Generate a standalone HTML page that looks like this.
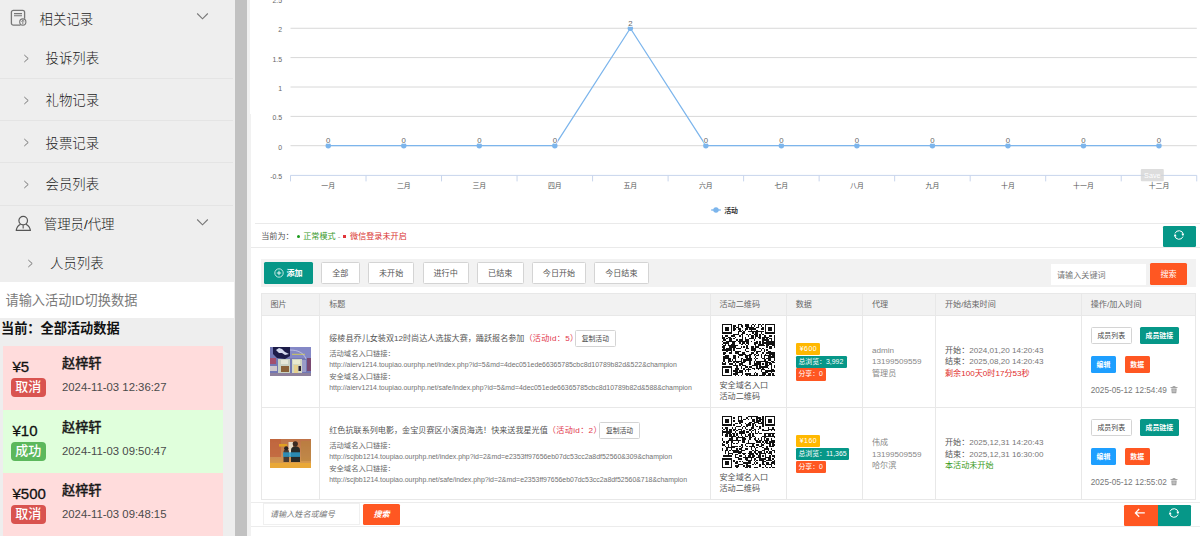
<!DOCTYPE html><html lang="zh-CN"><head><meta charset="utf-8"><title>活动管理</title><style>
*{box-sizing:border-box;margin:0;padding:0}
html,body{width:1200px;height:536px;overflow:hidden;background:#fff}
body{position:relative;font-family:"Liberation Sans","Noto Sans CJK SC",sans-serif;color:#555}
.a{position:absolute}
.t{position:absolute;white-space:nowrap;line-height:12px;height:12px}
.side{left:0;top:0;width:235px;height:536px;background:#eee}
.nav{font-size:13.4px;color:#333;line-height:18px;height:18px;font-weight:300;color:#1c1c1c;margin-top:1.4px}
.sep{position:absolute;left:0;width:233px;height:1px;background:#e4e4e4}
.card{position:absolute;left:3px;width:220px}
.amt{font-size:15px;color:#111;-webkit-text-stroke:.3px #111;line-height:18px;height:18px}
.bdg{position:absolute;left:10.5px;width:35.5px;height:18.8px;border-radius:4px;color:#fff;font-weight:500;font-size:13px;line-height:18.5px;text-align:center}
.nm{font-size:13.2px;font-weight:500;color:#1a1a1a;-webkit-text-stroke:.3px #1a1a1a;margin-top:1px;line-height:18px;height:18px}
.dt{font-size:11.35px;color:#4a4a4a;line-height:14px;height:14px}
.m{font-size:8.1px;color:#666;margin-top:.8px}
.s{font-size:7.3px;color:#6a6a6a;margin-top:.9px}
.u{font-size:6.93px;margin-top:0;color:#727272}
.btn{position:absolute;border-radius:1.5px;font-size:8.1px;text-align:center;white-space:nowrap}
.w{background:#fff;border:1px solid #d4d4d4;color:#555}
.teal{background:#069788;color:#fff}
.org{background:#ff5722;color:#fff}
.blue{background:#1e9fff;color:#fff}
.hl{position:absolute;height:1px;background:#e8e8e8}
.vl{position:absolute;width:1px;background:#e8e8e8}
.tag{position:absolute;left:795.75px;height:12.3px;border-radius:1.3px;color:#fff;font-size:6.9px;line-height:12.6px;padding:0 2.7px;white-space:nowrap;overflow:hidden}
</style></head><body>
<div class="a side"></div>
<div class="a" style="left:235px;top:0;width:12px;height:536px;background:#c1c1c1"></div>
<div class="a" style="left:247px;top:0;width:3px;height:536px;background:#f0f0f0"></div>
<div class="a" style="left:250px;top:114px;width:1px;height:422px;background:#f1f1f1"></div>
<svg class="a" style="left:10px;top:9px" width="18" height="18" viewBox="0 0 18 18"><path d="M10.5 16.2H3.4a2 2 0 0 1-2-2V3.3a2 2 0 0 1 2-2h9.2a2 2 0 0 1 2 2v6.5" fill="none" stroke="#777" stroke-width="1.3"/><path d="M4 4.6h8M4 6.7h8" stroke="#777" stroke-width="1.1"/><circle cx="12.8" cy="13" r="3.1" fill="#eee" stroke="#777" stroke-width="1.1"/><path d="M12.8 15v-3.6M11.3 12.6l1.5-1.4 1.5 1.4" fill="none" stroke="#777" stroke-width=".9"/></svg>
<div class="t nav" style="left:39.5px;top:10px">相关记录</div>
<svg class="a" style="left:195.5px;top:12px" width="13" height="9" viewBox="0 0 13 9"><path d="M1.2 1.5 L6.5 6.8 L11.8 1.5" fill="none" stroke="#777" stroke-width="1.1"/></svg>
<svg class="a" style="left:22.8px;top:54.0px" width="7" height="9" viewBox="0 0 7 9"><path d="M1.3 1 L5.2 4.5 L1.3 8" fill="none" stroke="#777" stroke-width="1"/></svg>
<div class="t nav" style="left:45.5px;top:49.0px">投诉列表</div>
<svg class="a" style="left:22.8px;top:95.5px" width="7" height="9" viewBox="0 0 7 9"><path d="M1.3 1 L5.2 4.5 L1.3 8" fill="none" stroke="#777" stroke-width="1"/></svg>
<div class="t nav" style="left:45.5px;top:90.5px">礼物记录</div>
<svg class="a" style="left:22.8px;top:138.25px" width="7" height="9" viewBox="0 0 7 9"><path d="M1.3 1 L5.2 4.5 L1.3 8" fill="none" stroke="#777" stroke-width="1"/></svg>
<div class="t nav" style="left:45.5px;top:133.25px">投票记录</div>
<svg class="a" style="left:22.8px;top:179.5px" width="7" height="9" viewBox="0 0 7 9"><path d="M1.3 1 L5.2 4.5 L1.3 8" fill="none" stroke="#777" stroke-width="1"/></svg>
<div class="t nav" style="left:45.5px;top:174.5px">会员列表</div>
<div class="sep" style="top:77.7px"></div>
<div class="sep" style="top:120px"></div>
<div class="sep" style="top:162.3px"></div>
<div class="sep" style="top:204.7px"></div>
<svg class="a" style="left:14px;top:214px" width="19" height="19" viewBox="0 0 19 19"><circle cx="9.2" cy="6.6" r="4.3" fill="none" stroke="#555" stroke-width="1.2"/><path d="M6.6 10.2 C4 11.4 2.6 13.8 2.2 16.4 H16.4 C16 13.8 14.6 11.4 11.8 10.2" fill="none" stroke="#555" stroke-width="1.2" stroke-linejoin="round"/><path d="M9.2 11v3.6" stroke="#777" stroke-width="1.4"/></svg>
<div class="t nav" style="left:43.75px;top:215px">管理员/代理</div>
<svg class="a" style="left:196px;top:217.5px" width="13" height="9" viewBox="0 0 13 9"><path d="M1.2 1.5 L6.5 6.8 L11.8 1.5" fill="none" stroke="#777" stroke-width="1.1"/></svg>
<svg class="a" style="left:26.8px;top:258.5px" width="7" height="9" viewBox="0 0 7 9"><path d="M1.3 1 L5.2 4.5 L1.3 8" fill="none" stroke="#777" stroke-width="1"/></svg>
<div class="t nav" style="left:50px;top:253.5px">人员列表</div>
<div class="a" style="left:0;top:281.75px;width:233.5px;height:36.5px;background:#fff"></div>
<div class="t" style="left:5.5px;top:291px;font-size:13.2px;color:#7a7a7a;line-height:18px;height:18px;margin-top:.6px">请输入活动ID切换数据</div>
<div class="t" style="left:1px;top:318.5px;font-size:13.2px;font-weight:700;color:#111;line-height:18px;height:18px;margin-top:1.4px">当前：全部活动数据</div>
<div class="card" style="top:345.5px;height:64px;background:#ffdcdc"></div>
<div class="t amt" style="left:12.5px;top:357.5px">¥5</div>
<div class="bdg" style="top:378.1px;background:#d9534f">取消</div>
<div class="t nm" style="left:62px;top:354.0px">赵梓轩</div>
<div class="t dt" style="left:62px;top:379.5px">2024-11-03 12:36:27</div>
<div class="card" style="top:409.5px;height:63px;background:#e0ffdc"></div>
<div class="t amt" style="left:12.5px;top:421.5px">¥10</div>
<div class="bdg" style="top:442.1px;background:#5cb85c">成功</div>
<div class="t nm" style="left:62px;top:418.0px">赵梓轩</div>
<div class="t dt" style="left:62px;top:443.5px">2024-11-03 09:50:47</div>
<div class="card" style="top:472.5px;height:64px;background:#ffdcdc"></div>
<div class="t amt" style="left:12.5px;top:484.5px">¥500</div>
<div class="bdg" style="top:505.1px;background:#d9534f">取消</div>
<div class="t nm" style="left:62px;top:481.0px">赵梓轩</div>
<div class="t dt" style="left:62px;top:506.5px">2024-11-03 09:48:15</div>
<svg class="a" style="left:0;top:0" width="1200" height="224" viewBox="0 0 1200 224" font-family="Liberation Sans,Noto Sans CJK SC,sans-serif"><path d="M290.5 28.25H1196.8" stroke="#d8d8d8" stroke-width="1" fill="none"/><path d="M290.5 57.6H1196.8" stroke="#d8d8d8" stroke-width="1" fill="none"/><path d="M290.5 87.0H1196.8" stroke="#d8d8d8" stroke-width="1" fill="none"/><path d="M290.5 116.4H1196.8" stroke="#d8d8d8" stroke-width="1" fill="none"/><path d="M290.5 145.7H1196.8" stroke="#d8d8d8" stroke-width="1" fill="none"/><path d="M290.5 175.4H1196.8M290.50 175.4v6M366.02 175.4v6M441.54 175.4v6M517.06 175.4v6M592.58 175.4v6M668.10 175.4v6M743.62 175.4v6M819.14 175.4v6M894.66 175.4v6M970.18 175.4v6M1045.70 175.4v6M1121.22 175.4v6M1196.74 175.4v6" stroke="#c8d5ec" stroke-width="1" fill="none"/><text x="282" y="2.75" text-anchor="end" font-size="6.9" fill="#666">2.5</text><text x="282" y="32.15" text-anchor="end" font-size="6.9" fill="#666">2</text><text x="282" y="61.50" text-anchor="end" font-size="6.9" fill="#666">1.5</text><text x="282" y="90.90" text-anchor="end" font-size="6.9" fill="#666">1</text><text x="282" y="120.30" text-anchor="end" font-size="6.9" fill="#666">0.5</text><text x="282" y="149.60" text-anchor="end" font-size="6.9" fill="#666">0</text><text x="282" y="179.30" text-anchor="end" font-size="6.9" fill="#666">-0.5</text><path d="M328.26 145.70 L403.78 145.70 L479.30 145.70 L554.82 145.70 L630.34 28.25 L705.86 145.70 L781.38 145.70 L856.90 145.70 L932.42 145.70 L1007.94 145.70 L1083.46 145.70 L1158.98 145.70" fill="none" stroke="#7cb5ec" stroke-width="1.25" stroke-linejoin="round"/><circle cx="328.26" cy="145.70" r="2.7" fill="#7cb5ec"/><text x="328.26" y="143.10" text-anchor="middle" font-size="7.8" fill="#666" stroke="#fff" stroke-width="1.4" paint-order="stroke" stroke-linejoin="round">0</text><text x="328.26" y="188.3" text-anchor="middle" font-size="6.9" fill="#555">一月</text><circle cx="403.78" cy="145.70" r="2.7" fill="#7cb5ec"/><text x="403.78" y="143.10" text-anchor="middle" font-size="7.8" fill="#666" stroke="#fff" stroke-width="1.4" paint-order="stroke" stroke-linejoin="round">0</text><text x="403.78" y="188.3" text-anchor="middle" font-size="6.9" fill="#555">二月</text><circle cx="479.30" cy="145.70" r="2.7" fill="#7cb5ec"/><text x="479.30" y="143.10" text-anchor="middle" font-size="7.8" fill="#666" stroke="#fff" stroke-width="1.4" paint-order="stroke" stroke-linejoin="round">0</text><text x="479.30" y="188.3" text-anchor="middle" font-size="6.9" fill="#555">三月</text><circle cx="554.82" cy="145.70" r="2.7" fill="#7cb5ec"/><text x="554.82" y="143.10" text-anchor="middle" font-size="7.8" fill="#666" stroke="#fff" stroke-width="1.4" paint-order="stroke" stroke-linejoin="round">0</text><text x="554.82" y="188.3" text-anchor="middle" font-size="6.9" fill="#555">四月</text><circle cx="630.34" cy="28.25" r="2.7" fill="#7cb5ec"/><text x="630.34" y="25.65" text-anchor="middle" font-size="7.8" fill="#666" stroke="#fff" stroke-width="1.4" paint-order="stroke" stroke-linejoin="round">2</text><text x="630.34" y="188.3" text-anchor="middle" font-size="6.9" fill="#555">五月</text><circle cx="705.86" cy="145.70" r="2.7" fill="#7cb5ec"/><text x="705.86" y="143.10" text-anchor="middle" font-size="7.8" fill="#666" stroke="#fff" stroke-width="1.4" paint-order="stroke" stroke-linejoin="round">0</text><text x="705.86" y="188.3" text-anchor="middle" font-size="6.9" fill="#555">六月</text><circle cx="781.38" cy="145.70" r="2.7" fill="#7cb5ec"/><text x="781.38" y="143.10" text-anchor="middle" font-size="7.8" fill="#666" stroke="#fff" stroke-width="1.4" paint-order="stroke" stroke-linejoin="round">0</text><text x="781.38" y="188.3" text-anchor="middle" font-size="6.9" fill="#555">七月</text><circle cx="856.90" cy="145.70" r="2.7" fill="#7cb5ec"/><text x="856.90" y="143.10" text-anchor="middle" font-size="7.8" fill="#666" stroke="#fff" stroke-width="1.4" paint-order="stroke" stroke-linejoin="round">0</text><text x="856.90" y="188.3" text-anchor="middle" font-size="6.9" fill="#555">八月</text><circle cx="932.42" cy="145.70" r="2.7" fill="#7cb5ec"/><text x="932.42" y="143.10" text-anchor="middle" font-size="7.8" fill="#666" stroke="#fff" stroke-width="1.4" paint-order="stroke" stroke-linejoin="round">0</text><text x="932.42" y="188.3" text-anchor="middle" font-size="6.9" fill="#555">九月</text><circle cx="1007.94" cy="145.70" r="2.7" fill="#7cb5ec"/><text x="1007.94" y="143.10" text-anchor="middle" font-size="7.8" fill="#666" stroke="#fff" stroke-width="1.4" paint-order="stroke" stroke-linejoin="round">0</text><text x="1007.94" y="188.3" text-anchor="middle" font-size="6.9" fill="#555">十月</text><circle cx="1083.46" cy="145.70" r="2.7" fill="#7cb5ec"/><text x="1083.46" y="143.10" text-anchor="middle" font-size="7.8" fill="#666" stroke="#fff" stroke-width="1.4" paint-order="stroke" stroke-linejoin="round">0</text><text x="1083.46" y="188.3" text-anchor="middle" font-size="6.9" fill="#555">十一月</text><circle cx="1158.98" cy="145.70" r="2.7" fill="#7cb5ec"/><text x="1158.98" y="143.10" text-anchor="middle" font-size="7.8" fill="#666" stroke="#fff" stroke-width="1.4" paint-order="stroke" stroke-linejoin="round">0</text><text x="1158.98" y="188.3" text-anchor="middle" font-size="6.9" fill="#555">十二月</text><path d="M711.2 210H720.8" stroke="#7cb5ec" stroke-width="1.4"/><circle cx="716" cy="210" r="2.7" fill="#7cb5ec"/><text x="724.2" y="212.6" font-size="6.9" font-weight="bold" fill="#333">活动</text><rect x="1140.8" y="169" width="23" height="12.2" rx="1" fill="#d4d4d4" opacity=".78"/><text x="1152.3" y="177.7" text-anchor="middle" font-size="7.2" fill="#fff">Save</text></svg>
<div class="hl" style="left:255px;top:222.8px;width:945px;background:#eaeaea"></div>
<div class="t m" style="left:261.25px;top:230.3px;color:#555">当前为：<span style="display:inline-block;width:3.4px;height:3.4px;border-radius:50%;background:#1a9a1a;vertical-align:1.2px;margin:0 2.9px 0 3.3px"></span><span style="color:#3a9a2a">正常模式</span><span style="color:#999;margin:0 2.6px 0 2.2px">-</span><span style="display:inline-block;width:2.8px;height:2.8px;background:#e0353a;vertical-align:1.6px;margin-right:4.2px"></span><span style="color:#d9342f">微信登录未开启</span></div>
<div class="a teal" style="left:1163px;top:226.25px;width:33.25px;height:20.5px;border-radius:1.3px"></div>
<svg class="a" style="left:1171.8px;top:227.6px" width="14" height="14" viewBox="-7 -7 14 14"><path d="M-3.99 -1.61A4.3 4.3 0 0 1 4.26 -0.60M3.99 1.61A4.3 4.3 0 0 1 -4.26 0.60" fill="none" stroke="#fff" stroke-width="1"/><path d="M2.3 -1.2h2.9L4 1.2zM-2.3 1.2h-2.9L-4 -1.2z" fill="#fff"/></svg>
<div class="hl" style="left:251px;top:246.7px;width:949px;background:#eaeaea"></div>
<div class="a" style="left:261.25px;top:259px;width:934.5px;height:28px;background:#f2f2f2"></div>
<div class="btn teal" style="left:264px;top:262px;width:49px;height:21.75px;line-height:23.35px;"><svg width="10" height="10" viewBox="0 0 10 10" style="vertical-align:-1.5px;margin-right:2.2px"><circle cx="5" cy="5" r="4.2" fill="none" stroke="#fff" stroke-width=".75"/><path d="M5 2.8v4.4M2.8 5h4.4" stroke="#fff" stroke-width=".9"/></svg><b>添加</b></div>
<div class="btn w" style="left:321.25px;top:262px;width:38.25px;height:21.75px;line-height:21.35px;">全部</div>
<div class="btn w" style="left:368px;top:262px;width:46.25px;height:21.75px;line-height:21.35px;">未开始</div>
<div class="btn w" style="left:422.5px;top:262px;width:46.25px;height:21.75px;line-height:21.35px;">进行中</div>
<div class="btn w" style="left:477px;top:262px;width:46.5px;height:21.75px;line-height:21.35px;">已结束</div>
<div class="btn w" style="left:531.75px;top:262px;width:54.5px;height:21.75px;line-height:21.35px;">今日开始</div>
<div class="btn w" style="left:594.25px;top:262px;width:54.25px;height:21.75px;line-height:21.35px;">今日结束</div>
<div class="a" style="left:1050.75px;top:263.75px;width:95.5px;height:21.25px;background:#fff"></div>
<div class="t m" style="left:1057px;top:269px;color:#777">请输入关键词</div>
<div class="btn org" style="left:1150px;top:263.25px;width:37px;height:21.75px;line-height:23.35px;">搜索</div>
<div class="a" style="left:261px;top:293px;width:934.75px;height:22.5px;background:#f2f2f2"></div>
<div class="hl" style="left:261px;top:292.6px;width:934.75px"></div>
<div class="hl" style="left:261px;top:315.2px;width:934.75px"></div>
<div class="hl" style="left:261px;top:407px;width:934.75px"></div>
<div class="hl" style="left:261px;top:499px;width:934.75px"></div>
<div class="vl" style="left:261px;top:293px;height:206.5px"></div>
<div class="vl" style="left:319px;top:293px;height:206.5px"></div>
<div class="vl" style="left:710px;top:293px;height:206.5px"></div>
<div class="vl" style="left:786px;top:293px;height:206.5px"></div>
<div class="vl" style="left:862px;top:293px;height:206.5px"></div>
<div class="vl" style="left:935.2px;top:293px;height:206.5px"></div>
<div class="vl" style="left:1081.1px;top:293px;height:206.5px"></div>
<div class="vl" style="left:1194.95px;top:293px;height:206.5px"></div>
<div class="t m" style="left:270.5px;top:298.5px">图片</div>
<div class="t m" style="left:329.25px;top:298.5px">标题</div>
<div class="t m" style="left:719.5px;top:298.5px">活动二维码</div>
<div class="t m" style="left:795.75px;top:298.5px">数据</div>
<div class="t m" style="left:872px;top:298.5px">代理</div>
<div class="t m" style="left:945px;top:298.5px">开始/结束时间</div>
<div class="t m" style="left:1090.75px;top:298.5px">操作/加入时间</div>
<svg width="0" height="0" style="position:absolute"><defs><path id="qr5" d="M0 0h7v1h-7zM11 0h3v1h-3zM16 0h3v1h-3zM21 0h1v1h-1zM23 0h1v1h-1zM25 0h2v1h-2zM28 0h1v1h-1zM30 0h7v1h-7zM0 1h1v1h-1zM6 1h1v1h-1zM8 1h2v1h-2zM11 1h1v1h-1zM13 1h2v1h-2zM16 1h3v1h-3zM20 1h1v1h-1zM22 1h1v1h-1zM25 1h1v1h-1zM27 1h1v1h-1zM30 1h1v1h-1zM36 1h1v1h-1zM0 2h1v1h-1zM2 2h3v1h-3zM6 2h1v1h-1zM8 2h1v1h-1zM10 2h2v1h-2zM14 2h1v1h-1zM17 2h5v1h-5zM24 2h2v1h-2zM28 2h1v1h-1zM30 2h1v1h-1zM32 2h3v1h-3zM36 2h1v1h-1zM0 3h1v1h-1zM2 3h3v1h-3zM6 3h1v1h-1zM8 3h2v1h-2zM11 3h2v1h-2zM16 3h2v1h-2zM19 3h5v1h-5zM27 3h2v1h-2zM30 3h1v1h-1zM32 3h3v1h-3zM36 3h1v1h-1zM0 4h1v1h-1zM2 4h3v1h-3zM6 4h1v1h-1zM8 4h1v1h-1zM12 4h1v1h-1zM14 4h1v1h-1zM16 4h1v1h-1zM20 4h1v1h-1zM24 4h1v1h-1zM30 4h1v1h-1zM32 4h3v1h-3zM36 4h1v1h-1zM0 5h1v1h-1zM6 5h1v1h-1zM11 5h3v1h-3zM15 5h1v1h-1zM18 5h11v1h-11zM30 5h1v1h-1zM36 5h1v1h-1zM0 6h7v1h-7zM11 6h1v1h-1zM14 6h2v1h-2zM21 6h1v1h-1zM23 6h2v1h-2zM27 6h1v1h-1zM30 6h7v1h-7zM8 7h4v1h-4zM13 7h2v1h-2zM17 7h1v1h-1zM19 7h1v1h-1zM22 7h3v1h-3zM26 7h1v1h-1zM28 7h1v1h-1zM0 8h1v1h-1zM2 8h2v1h-2zM6 8h3v1h-3zM12 8h1v1h-1zM14 8h1v1h-1zM18 8h1v1h-1zM20 8h2v1h-2zM23 8h2v1h-2zM26 8h1v1h-1zM29 8h2v1h-2zM33 8h2v1h-2zM36 8h1v1h-1zM0 9h2v1h-2zM4 9h2v1h-2zM9 9h1v1h-1zM14 9h1v1h-1zM16 9h1v1h-1zM20 9h2v1h-2zM23 9h1v1h-1zM25 9h2v1h-2zM28 9h5v1h-5zM36 9h1v1h-1zM0 10h2v1h-2zM3 10h1v1h-1zM5 10h2v1h-2zM8 10h1v1h-1zM14 10h1v1h-1zM16 10h1v1h-1zM19 10h3v1h-3zM23 10h1v1h-1zM26 10h1v1h-1zM28 10h2v1h-2zM31 10h1v1h-1zM33 10h2v1h-2zM36 10h1v1h-1zM1 11h2v1h-2zM5 11h2v1h-2zM10 11h1v1h-1zM12 11h3v1h-3zM16 11h3v1h-3zM22 11h1v1h-1zM28 11h5v1h-5zM34 11h1v1h-1zM36 11h1v1h-1zM0 12h1v1h-1zM3 12h7v1h-7zM11 12h8v1h-8zM20 12h1v1h-1zM24 12h1v1h-1zM26 12h1v1h-1zM28 12h1v1h-1zM31 12h6v1h-6zM1 13h4v1h-4zM7 13h2v1h-2zM12 13h1v1h-1zM14 13h2v1h-2zM17 13h2v1h-2zM22 13h3v1h-3zM26 13h1v1h-1zM28 13h9v1h-9zM0 14h1v1h-1zM2 14h1v1h-1zM4 14h1v1h-1zM6 14h3v1h-3zM13 14h2v1h-2zM16 14h1v1h-1zM18 14h1v1h-1zM22 14h2v1h-2zM25 14h4v1h-4zM31 14h6v1h-6zM1 15h2v1h-2zM4 15h7v1h-7zM17 15h1v1h-1zM23 15h1v1h-1zM25 15h5v1h-5zM31 15h2v1h-2zM35 15h2v1h-2zM0 16h2v1h-2zM5 16h5v1h-5zM13 16h1v1h-1zM15 16h1v1h-1zM17 16h1v1h-1zM20 16h2v1h-2zM23 16h3v1h-3zM31 16h1v1h-1zM33 16h2v1h-2zM36 16h1v1h-1zM1 17h1v1h-1zM3 17h4v1h-4zM8 17h1v1h-1zM10 17h3v1h-3zM17 17h2v1h-2zM20 17h4v1h-4zM26 17h1v1h-1zM28 17h1v1h-1zM33 17h2v1h-2zM0 18h7v1h-7zM8 18h1v1h-1zM16 18h1v1h-1zM20 18h4v1h-4zM27 18h1v1h-1zM29 18h1v1h-1zM31 18h1v1h-1zM3 19h1v1h-1zM6 19h1v1h-1zM9 19h4v1h-4zM17 19h2v1h-2zM22 19h1v1h-1zM24 19h3v1h-3zM29 19h1v1h-1zM32 19h2v1h-2zM1 20h2v1h-2zM5 20h2v1h-2zM9 20h3v1h-3zM14 20h2v1h-2zM20 20h2v1h-2zM24 20h1v1h-1zM28 20h1v1h-1zM31 20h6v1h-6zM1 21h1v1h-1zM11 21h6v1h-6zM19 21h2v1h-2zM22 21h2v1h-2zM25 21h1v1h-1zM27 21h1v1h-1zM30 21h1v1h-1zM33 21h4v1h-4zM2 22h3v1h-3zM8 22h2v1h-2zM12 22h3v1h-3zM16 22h4v1h-4zM22 22h1v1h-1zM24 22h2v1h-2zM27 22h1v1h-1zM29 22h5v1h-5zM35 22h2v1h-2zM1 23h4v1h-4zM8 23h2v1h-2zM11 23h1v1h-1zM16 23h2v1h-2zM19 23h1v1h-1zM23 23h1v1h-1zM27 23h1v1h-1zM29 23h1v1h-1zM32 23h5v1h-5zM1 24h5v1h-5zM8 24h2v1h-2zM13 24h2v1h-2zM17 24h4v1h-4zM22 24h1v1h-1zM24 24h1v1h-1zM28 24h2v1h-2zM31 24h3v1h-3zM36 24h1v1h-1zM1 25h1v1h-1zM4 25h2v1h-2zM7 25h1v1h-1zM9 25h1v1h-1zM13 25h1v1h-1zM15 25h6v1h-6zM23 25h1v1h-1zM29 25h2v1h-2zM32 25h2v1h-2zM36 25h1v1h-1zM1 26h1v1h-1zM4 26h3v1h-3zM8 26h6v1h-6zM15 26h2v1h-2zM19 26h1v1h-1zM22 26h1v1h-1zM24 26h8v1h-8zM34 26h2v1h-2zM0 27h1v1h-1zM2 27h1v1h-1zM4 27h1v1h-1zM8 27h1v1h-1zM10 27h2v1h-2zM13 27h3v1h-3zM19 27h1v1h-1zM22 27h1v1h-1zM24 27h3v1h-3zM30 27h4v1h-4zM35 27h2v1h-2zM0 28h3v1h-3zM5 28h3v1h-3zM9 28h1v1h-1zM12 28h3v1h-3zM19 28h1v1h-1zM22 28h5v1h-5zM28 28h1v1h-1zM30 28h2v1h-2zM33 28h2v1h-2zM8 29h3v1h-3zM12 29h1v1h-1zM14 29h3v1h-3zM21 29h4v1h-4zM26 29h1v1h-1zM30 29h3v1h-3zM34 29h1v1h-1zM36 29h1v1h-1zM0 30h7v1h-7zM10 30h1v1h-1zM13 30h1v1h-1zM16 30h2v1h-2zM19 30h2v1h-2zM24 30h1v1h-1zM26 30h6v1h-6zM34 30h1v1h-1zM36 30h1v1h-1zM0 31h1v1h-1zM6 31h1v1h-1zM9 31h3v1h-3zM13 31h1v1h-1zM15 31h1v1h-1zM18 31h1v1h-1zM21 31h2v1h-2zM24 31h3v1h-3zM28 31h1v1h-1zM32 31h1v1h-1zM34 31h1v1h-1zM0 32h1v1h-1zM2 32h3v1h-3zM6 32h1v1h-1zM9 32h3v1h-3zM15 32h1v1h-1zM17 32h3v1h-3zM22 32h1v1h-1zM25 32h1v1h-1zM27 32h3v1h-3zM34 32h2v1h-2zM0 33h1v1h-1zM2 33h3v1h-3zM6 33h1v1h-1zM8 33h3v1h-3zM12 33h3v1h-3zM16 33h1v1h-1zM18 33h1v1h-1zM27 33h1v1h-1zM30 33h7v1h-7zM0 34h1v1h-1zM2 34h3v1h-3zM6 34h1v1h-1zM9 34h6v1h-6zM23 34h1v1h-1zM28 34h4v1h-4zM34 34h1v1h-1zM0 35h1v1h-1zM6 35h1v1h-1zM8 35h3v1h-3zM14 35h1v1h-1zM16 35h4v1h-4zM22 35h1v1h-1zM24 35h1v1h-1zM28 35h3v1h-3zM32 35h2v1h-2zM35 35h1v1h-1zM0 36h7v1h-7zM9 36h1v1h-1zM11 36h1v1h-1zM13 36h1v1h-1zM17 36h1v1h-1zM19 36h6v1h-6zM26 36h4v1h-4zM31 36h3v1h-3zM35 36h2v1h-2z"/>
<path id="qr2" d="M0 0h7v1h-7zM11 0h3v1h-3zM18 0h7v1h-7zM28 0h1v1h-1zM30 0h7v1h-7zM0 1h1v1h-1zM6 1h1v1h-1zM8 1h1v1h-1zM11 1h1v1h-1zM13 1h1v1h-1zM17 1h1v1h-1zM20 1h1v1h-1zM24 1h3v1h-3zM28 1h1v1h-1zM30 1h1v1h-1zM36 1h1v1h-1zM0 2h1v1h-1zM2 2h3v1h-3zM6 2h1v1h-1zM11 2h1v1h-1zM13 2h1v1h-1zM15 2h2v1h-2zM18 2h1v1h-1zM21 2h2v1h-2zM24 2h1v1h-1zM26 2h3v1h-3zM30 2h1v1h-1zM32 2h3v1h-3zM36 2h1v1h-1zM0 3h1v1h-1zM2 3h3v1h-3zM6 3h1v1h-1zM8 3h1v1h-1zM11 3h4v1h-4zM21 3h2v1h-2zM24 3h3v1h-3zM28 3h1v1h-1zM30 3h1v1h-1zM32 3h3v1h-3zM36 3h1v1h-1zM0 4h1v1h-1zM2 4h3v1h-3zM6 4h1v1h-1zM12 4h3v1h-3zM19 4h2v1h-2zM22 4h4v1h-4zM27 4h2v1h-2zM30 4h1v1h-1zM32 4h3v1h-3zM36 4h1v1h-1zM0 5h1v1h-1zM6 5h1v1h-1zM9 5h2v1h-2zM12 5h1v1h-1zM16 5h1v1h-1zM18 5h2v1h-2zM21 5h2v1h-2zM25 5h4v1h-4zM30 5h1v1h-1zM36 5h1v1h-1zM0 6h7v1h-7zM8 6h1v1h-1zM13 6h1v1h-1zM17 6h3v1h-3zM21 6h1v1h-1zM23 6h1v1h-1zM28 6h1v1h-1zM30 6h7v1h-7zM10 7h3v1h-3zM15 7h1v1h-1zM17 7h1v1h-1zM21 7h1v1h-1zM24 7h1v1h-1zM26 7h1v1h-1zM28 7h1v1h-1zM0 8h1v1h-1zM2 8h2v1h-2zM7 8h1v1h-1zM9 8h1v1h-1zM14 8h1v1h-1zM16 8h1v1h-1zM20 8h2v1h-2zM26 8h1v1h-1zM32 8h1v1h-1zM35 8h1v1h-1zM1 9h1v1h-1zM3 9h1v1h-1zM5 9h2v1h-2zM8 9h2v1h-2zM11 9h3v1h-3zM17 9h1v1h-1zM19 9h2v1h-2zM22 9h2v1h-2zM25 9h1v1h-1zM28 9h1v1h-1zM32 9h5v1h-5zM0 10h1v1h-1zM3 10h1v1h-1zM5 10h2v1h-2zM8 10h1v1h-1zM10 10h1v1h-1zM13 10h1v1h-1zM15 10h1v1h-1zM19 10h1v1h-1zM21 10h1v1h-1zM23 10h1v1h-1zM28 10h5v1h-5zM34 10h1v1h-1zM36 10h1v1h-1zM0 11h7v1h-7zM9 11h1v1h-1zM12 11h4v1h-4zM17 11h2v1h-2zM20 11h1v1h-1zM23 11h1v1h-1zM25 11h1v1h-1zM0 12h1v1h-1zM3 12h3v1h-3zM7 12h2v1h-2zM10 12h1v1h-1zM12 12h4v1h-4zM19 12h1v1h-1zM21 12h1v1h-1zM23 12h2v1h-2zM26 12h2v1h-2zM29 12h8v1h-8zM0 13h1v1h-1zM2 13h2v1h-2zM5 13h2v1h-2zM8 13h1v1h-1zM10 13h1v1h-1zM13 13h1v1h-1zM16 13h1v1h-1zM18 13h2v1h-2zM21 13h1v1h-1zM29 13h2v1h-2zM32 13h2v1h-2zM35 13h1v1h-1zM2 14h2v1h-2zM5 14h5v1h-5zM11 14h1v1h-1zM14 14h1v1h-1zM16 14h2v1h-2zM19 14h1v1h-1zM21 14h2v1h-2zM28 14h9v1h-9zM6 15h2v1h-2zM10 15h6v1h-6zM19 15h2v1h-2zM23 15h1v1h-1zM27 15h1v1h-1zM29 15h2v1h-2zM36 15h1v1h-1zM0 16h1v1h-1zM5 16h3v1h-3zM10 16h1v1h-1zM14 16h3v1h-3zM19 16h1v1h-1zM22 16h2v1h-2zM25 16h1v1h-1zM27 16h1v1h-1zM29 16h1v1h-1zM31 16h2v1h-2zM34 16h1v1h-1zM0 17h1v1h-1zM4 17h9v1h-9zM14 17h2v1h-2zM18 17h1v1h-1zM23 17h2v1h-2zM26 17h2v1h-2zM29 17h4v1h-4zM34 17h3v1h-3zM1 18h1v1h-1zM3 18h2v1h-2zM6 18h2v1h-2zM11 18h1v1h-1zM14 18h2v1h-2zM18 18h1v1h-1zM24 18h3v1h-3zM28 18h1v1h-1zM30 18h2v1h-2zM33 18h4v1h-4zM0 19h1v1h-1zM3 19h1v1h-1zM6 19h1v1h-1zM8 19h1v1h-1zM10 19h1v1h-1zM17 19h6v1h-6zM27 19h1v1h-1zM29 19h1v1h-1zM31 19h3v1h-3zM35 19h1v1h-1zM0 20h2v1h-2zM4 20h1v1h-1zM6 20h1v1h-1zM13 20h2v1h-2zM16 20h1v1h-1zM21 20h1v1h-1zM24 20h2v1h-2zM27 20h2v1h-2zM33 20h1v1h-1zM35 20h2v1h-2zM2 21h1v1h-1zM4 21h1v1h-1zM6 21h5v1h-5zM12 21h1v1h-1zM14 21h1v1h-1zM17 21h1v1h-1zM19 21h4v1h-4zM26 21h2v1h-2zM31 21h1v1h-1zM33 21h3v1h-3zM3 22h6v1h-6zM13 22h2v1h-2zM20 22h1v1h-1zM22 22h1v1h-1zM24 22h1v1h-1zM28 22h1v1h-1zM31 22h1v1h-1zM0 23h1v1h-1zM3 23h1v1h-1zM6 23h1v1h-1zM10 23h1v1h-1zM12 23h2v1h-2zM16 23h2v1h-2zM20 23h1v1h-1zM23 23h1v1h-1zM29 23h4v1h-4zM34 23h1v1h-1zM0 24h1v1h-1zM2 24h2v1h-2zM5 24h1v1h-1zM7 24h5v1h-5zM13 24h3v1h-3zM21 24h1v1h-1zM23 24h2v1h-2zM28 24h2v1h-2zM32 24h1v1h-1zM35 24h2v1h-2zM2 25h1v1h-1zM4 25h1v1h-1zM8 25h6v1h-6zM19 25h2v1h-2zM22 25h2v1h-2zM25 25h3v1h-3zM29 25h1v1h-1zM31 25h1v1h-1zM33 25h2v1h-2zM36 25h1v1h-1zM2 26h1v1h-1zM4 26h4v1h-4zM11 26h2v1h-2zM14 26h3v1h-3zM18 26h4v1h-4zM23 26h2v1h-2zM26 26h5v1h-5zM32 26h3v1h-3zM4 27h1v1h-1zM7 27h1v1h-1zM9 27h2v1h-2zM15 27h1v1h-1zM19 27h3v1h-3zM24 27h1v1h-1zM26 27h1v1h-1zM30 27h1v1h-1zM34 27h1v1h-1zM1 28h6v1h-6zM9 28h1v1h-1zM12 28h2v1h-2zM16 28h1v1h-1zM18 28h2v1h-2zM21 28h2v1h-2zM25 28h2v1h-2zM28 28h1v1h-1zM30 28h1v1h-1zM33 28h1v1h-1zM35 28h2v1h-2zM9 29h3v1h-3zM15 29h7v1h-7zM24 29h3v1h-3zM30 29h4v1h-4zM36 29h1v1h-1zM0 30h7v1h-7zM11 30h3v1h-3zM16 30h2v1h-2zM20 30h1v1h-1zM22 30h2v1h-2zM26 30h5v1h-5zM32 30h2v1h-2zM35 30h1v1h-1zM0 31h1v1h-1zM6 31h1v1h-1zM8 31h1v1h-1zM17 31h4v1h-4zM22 31h1v1h-1zM24 31h1v1h-1zM26 31h3v1h-3zM31 31h4v1h-4zM36 31h1v1h-1zM0 32h1v1h-1zM2 32h3v1h-3zM6 32h1v1h-1zM8 32h1v1h-1zM10 32h1v1h-1zM12 32h1v1h-1zM14 32h1v1h-1zM18 32h2v1h-2zM23 32h1v1h-1zM28 32h3v1h-3zM35 32h2v1h-2zM0 33h1v1h-1zM2 33h3v1h-3zM6 33h1v1h-1zM9 33h2v1h-2zM15 33h5v1h-5zM22 33h1v1h-1zM24 33h1v1h-1zM28 33h1v1h-1zM31 33h2v1h-2zM34 33h3v1h-3zM0 34h1v1h-1zM2 34h3v1h-3zM6 34h1v1h-1zM11 34h4v1h-4zM17 34h1v1h-1zM21 34h1v1h-1zM23 34h1v1h-1zM26 34h1v1h-1zM28 34h2v1h-2zM31 34h4v1h-4zM36 34h1v1h-1zM0 35h1v1h-1zM6 35h1v1h-1zM9 35h3v1h-3zM15 35h1v1h-1zM17 35h3v1h-3zM26 35h1v1h-1zM30 35h1v1h-1zM34 35h1v1h-1zM0 36h7v1h-7zM10 36h1v1h-1zM16 36h2v1h-2zM19 36h1v1h-1zM22 36h3v1h-3zM28 36h1v1h-1zM31 36h1v1h-1zM33 36h1v1h-1zM35 36h2v1h-2z"/>
</defs></svg>
<svg class="a" style="left:270px;top:347px" width="41" height="29" viewBox="0 0 41 29"><defs><filter id="bl" x="0" y="0" width="1" height="1"><feGaussianBlur stdDeviation=".55"/></filter><clipPath id="cp"><rect width="41" height="29"/></clipPath></defs><rect width="41" height="29" fill="#7378b4"/><g filter="url(#bl)" clip-path="url(#cp)"><rect x="-2" y="-2" width="45" height="33" fill="#7378b4"/><path d="M3 -1h17v10l-5 3-8-1-4-4z" fill="#1b1e48"/><path d="M6 3l3-2 3 1 3 3 4 2-4 1-3-2-3 0z" fill="#d5daee"/><rect x="20" y="-1" width="22" height="12" fill="#8488c6"/><path d="M22 7.3h13" stroke="#d6cf4e" stroke-width=".9"/><path d="M20 3c8 0 14 3 16 9" stroke="#d0d2ea" stroke-width=".7" fill="none"/><rect x="-1" y="11" width="7" height="6" fill="#a2506e"/><rect x="37" y="11" width="5" height="13" fill="#7a4a72"/><rect x="8" y="12" width="12" height="14" fill="#c9d2c4"/><rect x="22" y="12" width="10" height="14" fill="#d2d6c2"/><rect x="11" y="13" width="7" height="4" fill="#e6e8d8"/><rect x="23" y="13" width="7" height="4" fill="#e8ead0"/><rect x="11" y="19" width="8" height="6" fill="#8a6238"/><rect x="24" y="18" width="4" height="8" fill="#e6d08e"/><rect x="28.5" y="19" width="2.5" height="5" fill="#2a2030"/><rect x="32" y="13" width="4" height="12" fill="#9a9cc8"/><rect x="-1" y="19" width="8" height="5" fill="#cfc8cc"/><rect x="-1" y="26" width="43" height="4" fill="#8e819c"/></g></svg>
<div class="t m" style="left:329.25px;top:332px;color:#555">绥棱县乔儿女装双12时尚达人选拔大赛，踊跃报名参加<span style="color:#e2384d;letter-spacing:.35px">（活动id：5）</span></div>
<div class="btn w" style="left:575px;top:330px;width:40.75px;height:17px;line-height:16.6px;font-size:6.8px;color:#444">复制活动</div>
<div class="t s" style="left:329.25px;top:347.00px">活动域名入口链接：</div>
<div class="t s u" style="left:329.25px;top:358.67px">http://aierv1214.toupiao.ourphp.net/index.php?id=5&amp;md=4dec051ede66365785cbc8d10789b82d&amp;522&amp;champion</div>
<div class="t s" style="left:329.25px;top:370.34px">安全域名入口链接：</div>
<div class="t s u" style="left:329.25px;top:382.01px">http://aierv1214.toupiao.ourphp.net/safe/index.php?id=5&amp;md=4dec051ede66365785cbc8d10789b82d&amp;588&amp;champion</div>
<svg class="a" style="left:722px;top:323.75px" width="53" height="52" viewBox="0 0 37 37" preserveAspectRatio="none" shape-rendering="crispEdges"><use href="#qr5" fill="#111"/></svg>
<div class="t m" style="left:719.5px;top:379px;color:#555">安全域名入口</div>
<div class="t m" style="left:719.5px;top:390.3px;color:#555">活动二维码</div>
<div class="tag" style="top:342.60px;background:#ffb800;width:24.3px;letter-spacing:.5px;padding-left:4px">¥600</div>
<div class="tag" style="top:355.50px;background:#069788;width:51px">总浏览：3,992</div>
<div class="tag" style="top:368.40px;background:#ff5722;width:30.5px">分享：0</div>
<div class="t m" style="left:872px;top:344.00px;color:#888">admin</div>
<div class="t m" style="left:872px;top:355.65px;color:#888">13199509559</div>
<div class="t m" style="left:872px;top:367.30px;color:#888">管理员</div>
<div class="t m" style="left:945px;top:344.00px;color:#777"><span style="color:#555">开始：</span>2024,01,20 14:20:43</div>
<div class="t m" style="left:945px;top:355.65px;color:#777"><span style="color:#555">结束：</span>2025,08,20 14:20:43</div>
<div class="t m" style="left:945px;top:367.30px;color:#e02a2a">剩余100天0时17分53秒</div>
<div class="btn w" style="left:1090.75px;top:327px;width:41.0px;height:17.25px;line-height:16.85px;font-size:6.9px;color:#444">成员列表</div>
<div class="btn teal" style="left:1139.5px;top:327px;width:39.75px;height:17.25px;line-height:18.85px;font-size:6.9px"><b>成员链接</b></div>
<div class="btn blue" style="left:1090.75px;top:356px;width:25.5px;height:17px;line-height:18.6px;font-size:6.9px"><b>编辑</b></div>
<div class="btn org" style="left:1124.5px;top:356px;width:25.5px;height:17px;line-height:18.6px;font-size:6.9px"><b>数据</b></div>
<div class="t m" style="left:1090.75px;top:384.5px;color:#777;font-size:8.2px">2025-05-12 12:54:49</div>
<svg class="a" style="left:1170px;top:386px" width="8" height="8" viewBox="0 0 8 8"><path d="M.5 1.5h7M2.9 1.3V.6h2.2v.7" fill="none" stroke="#8f8f8f" stroke-width=".8"/><path d="M1.3 2.5h5.4l-.45 4.7H1.75z" fill="#9a9a9a"/><path d="M3.1 3.3v3M4.9 3.3v3" stroke="#fff" stroke-width=".6"/></svg>
<svg class="a" style="left:270px;top:439.1px" width="41" height="29" viewBox="0 0 41 29"><defs><linearGradient id="g2" x1="0" y1="0" x2="0" y2="1"><stop offset="0" stop-color="#bd6f45"/><stop offset=".55" stop-color="#c98a55"/><stop offset="1" stop-color="#e2a745"/></linearGradient></defs><rect width="41" height="29" fill="url(#g2)"/><g filter="url(#bl)" clip-path="url(#cp)"><rect x="-2" y="-2" width="45" height="33" fill="url(#g2)"/><rect x="-1" y="-1" width="12" height="19" fill="#c0603a" opacity=".7"/><rect x="31" y="2" width="11" height="20" fill="#b8823e" opacity=".6"/><rect x="18.5" y="3" width="4.5" height="14" fill="#e6dac6"/><rect x="9" y="5" width="8" height="2.6" fill="#e0a020"/><path d="M21 11c0-5 9-5 9 0v12h-9z" fill="#2a2a28"/><circle cx="25.3" cy="4.8" r="2.6" fill="#3a2a20"/><path d="M13.5 13c0-4 5.5-4 5.5 0v10h-5.500z" fill="#4a3a30"/><circle cx="16.2" cy="9.3" r="2.1" fill="#2a2020"/><rect x="13" y="13.3" width="17" height="4.6" fill="#2a9ac8" opacity=".85"/><rect x="-1" y="24" width="43" height="6" fill="#e9a838"/></g></svg>
<div class="t m" style="left:329.25px;top:424.1px;color:#555">红色抗联系列电影，金宝贝赛区小演员海选！快来送我星光值<span style="color:#e2384d;letter-spacing:.35px">（活动id：2）</span></div>
<div class="btn w" style="left:599.4px;top:422.1px;width:40.39999999999998px;height:17.0px;line-height:16.6px;font-size:6.8px;color:#444">复制活动</div>
<div class="t s" style="left:329.25px;top:439.10px">活动域名入口链接：</div>
<div class="t s u" style="left:329.25px;top:450.77px">http://scjbb1214.toupiao.ourphp.net/index.php?id=2&amp;md=e2353ff97656eb07dc53cc2a8df52560&amp;309&amp;champion</div>
<div class="t s" style="left:329.25px;top:462.44px">安全域名入口链接：</div>
<div class="t s u" style="left:329.25px;top:474.11px">http://scjbb1214.toupiao.ourphp.net/safe/index.php?id=2&amp;md=e2353ff97656eb07dc53cc2a8df52560&amp;718&amp;champion</div>
<svg class="a" style="left:722px;top:415.85px" width="53" height="52" viewBox="0 0 37 37" preserveAspectRatio="none" shape-rendering="crispEdges"><use href="#qr2" fill="#111"/></svg>
<div class="t m" style="left:719.5px;top:471.1px;color:#555">安全域名入口</div>
<div class="t m" style="left:719.5px;top:482.4px;color:#555">活动二维码</div>
<div class="tag" style="top:434.70px;background:#ffb800;width:24.3px;letter-spacing:.5px;padding-left:4px">¥160</div>
<div class="tag" style="top:447.60px;background:#069788;width:53.5px">总浏览：11,365</div>
<div class="tag" style="top:460.50px;background:#ff5722;width:30.5px">分享：0</div>
<div class="t m" style="left:872px;top:436.10px;color:#888">伟成</div>
<div class="t m" style="left:872px;top:447.75px;color:#888">13199509559</div>
<div class="t m" style="left:872px;top:459.40px;color:#888">哈尔滨</div>
<div class="t m" style="left:945px;top:436.10px;color:#777"><span style="color:#555">开始：</span>2025,12,31 14:20:43</div>
<div class="t m" style="left:945px;top:447.75px;color:#777"><span style="color:#555">结束：</span>2025,12,31 16:30:00</div>
<div class="t m" style="left:945px;top:459.40px;color:#3a9a1a">本活动未开始</div>
<div class="btn w" style="left:1090.75px;top:419.1px;width:41.0px;height:17.25px;line-height:16.85px;font-size:6.9px;color:#444">成员列表</div>
<div class="btn teal" style="left:1139.5px;top:419.1px;width:39.75px;height:17.25px;line-height:18.85px;font-size:6.9px"><b>成员链接</b></div>
<div class="btn blue" style="left:1090.75px;top:448.1px;width:25.5px;height:17.0px;line-height:18.6px;font-size:6.9px"><b>编辑</b></div>
<div class="btn org" style="left:1124.5px;top:448.1px;width:25.5px;height:17.0px;line-height:18.6px;font-size:6.9px"><b>数据</b></div>
<div class="t m" style="left:1090.75px;top:476.6px;color:#777;font-size:8.2px">2025-05-12 12:55:02</div>
<svg class="a" style="left:1170px;top:478.1px" width="8" height="8" viewBox="0 0 8 8"><path d="M.5 1.5h7M2.9 1.3V.6h2.2v.7" fill="none" stroke="#8f8f8f" stroke-width=".8"/><path d="M1.3 2.5h5.4l-.45 4.7H1.75z" fill="#9a9a9a"/><path d="M3.1 3.3v3M4.9 3.3v3" stroke="#fff" stroke-width=".6"/></svg>
<div class="hl" style="left:251px;top:501.8px;width:949px;background:#ececec"></div>
<div class="a" style="left:262.5px;top:503.25px;width:97px;height:21.25px;background:#fff;border:1px solid #f0f0f0"></div>
<div class="t m" style="left:270px;top:508px;color:#777;font-style:italic">请输入姓名或编号</div>
<div class="btn org" style="left:363px;top:504px;width:37px;height:21.25px;line-height:22.85px;"><i><b>搜索</b></i></div>
<div class="a org" style="left:1124.2px;top:504.8px;width:33.4px;height:21px;border-radius:1.3px 0 0 1.3px"></div>
<svg class="a" style="left:1134px;top:508px" width="12" height="10" viewBox="0 0 12 10"><path d="M1.6 4.9h9.2M5.2 1L1.4 4.9l3.8 3.9" fill="none" stroke="#fff" stroke-width="1.25"/></svg>
<div class="a teal" style="left:1157.5px;top:504.8px;width:33.3px;height:21px;border-radius:0 1.3px 1.3px 0"></div>
<svg class="a" style="left:1166.6px;top:506.29999999999995px" width="14" height="14" viewBox="-7 -7 14 14"><path d="M-3.99 -1.61A4.3 4.3 0 0 1 4.26 -0.60M3.99 1.61A4.3 4.3 0 0 1 -4.26 0.60" fill="none" stroke="#fff" stroke-width="1"/><path d="M2.3 -1.2h2.9L4 1.2zM-2.3 1.2h-2.9L-4 -1.2z" fill="#fff"/></svg>
<div class="hl" style="left:251px;top:526px;width:949px;background:#ececec"></div>
</body></html>
